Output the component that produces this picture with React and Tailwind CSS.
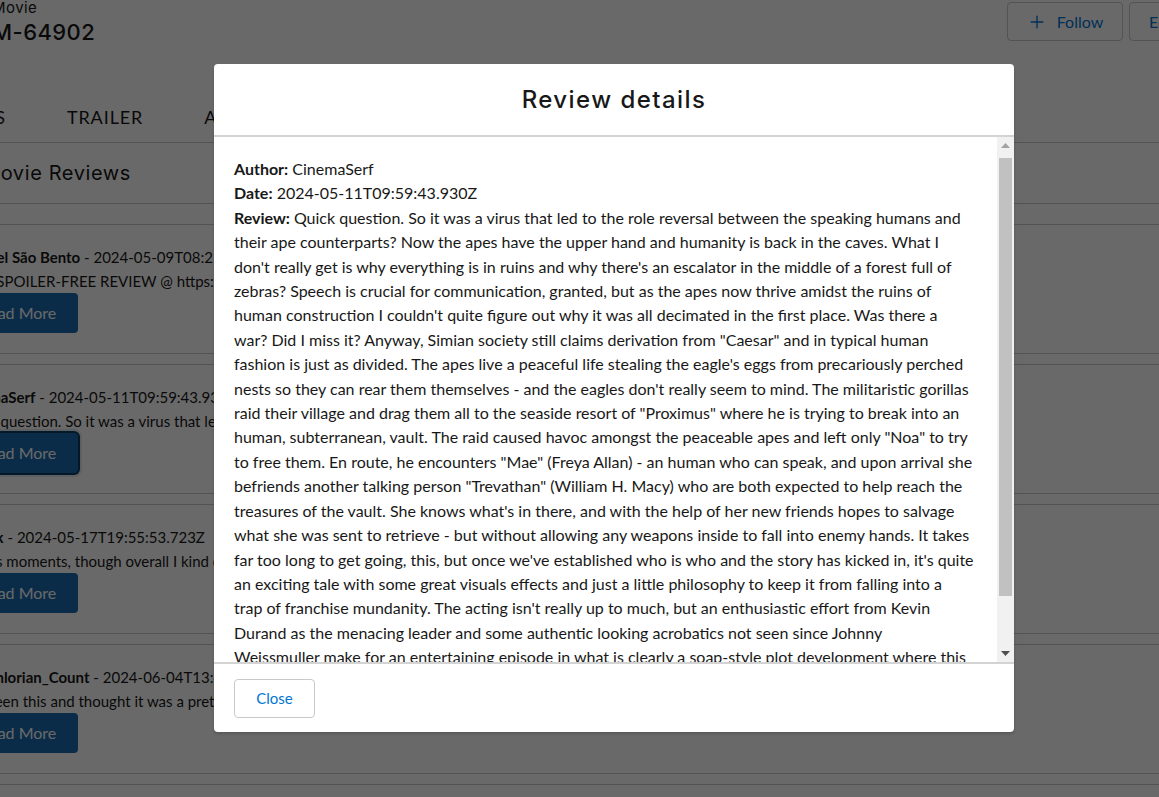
import { Plus } from 'lucide-react'

// review text broken the way the dialog wraps it
const reviewLines = [
  'Quick question. So it was a virus that led to the role reversal between the speaking humans and',
  'their ape counterparts? Now the apes have the upper hand and humanity is back in the caves. What I',
  "don't really get is why everything is in ruins and why there's an escalator in the middle of a forest full of",
  'zebras? Speech is crucial for communication, granted, but as the apes now thrive amidst the ruins of',
  "human construction I couldn't quite figure out why it was all decimated in the first place. Was there a",
  'war? Did I miss it? Anyway, Simian society still claims derivation from "Caesar" and in typical human',
  "fashion is just as divided. The apes live a peaceful life stealing the eagle's eggs from precariously perched",
  "nests so they can rear them themselves - and the eagles don't really seem to mind. The militaristic gorillas",
  'raid their village and drag them all to the seaside resort of "Proximus" where he is trying to break into an',
  'human, subterranean, vault. The raid caused havoc amongst the peaceable apes and left only "Noa" to try',
  'to free them. En route, he encounters "Mae" (Freya Allan) - an human who can speak, and upon arrival she',
  'befriends another talking person "Trevathan" (William H. Macy) who are both expected to help reach the',
  "treasures of the vault. She knows what's in there, and with the help of her new friends hopes to salvage",
  'what she was sent to retrieve - but without allowing any weapons inside to fall into enemy hands. It takes',
  "far too long to get going, this, but once we've established who is who and the story has kicked in, it's quite",
  'an exciting tale with some great visuals effects and just a little philosophy to keep it from falling into a',
  "trap of franchise mundanity. The acting isn't really up to much, but an enthusiastic effort from Kevin",
  'Durand as the menacing leader and some authentic looking acrobatics not seen since Johnny',
  'Weissmuller make for an entertaining episode in what is clearly a soap-style plot development where this',
  "franchise is heading. It's watchable, if a little long.",
]

const reviews = [
  { author: 'Manuel São Bento', date: '2024-05-09T08:21:14.650Z', text: 'FULL SPOILER-FREE REVIEW @ https://fandomwire.com/kingdom-of-the-planet' },
  { author: 'CinemaSerf', date: '2024-05-11T09:59:43.930Z', text: 'Quick question. So it was a virus that led to the role reversal', focused: true },
  { author: 'r96skk', date: '2024-05-17T19:55:53.723Z', text: 'Has its moments, though overall I kind of expected more' },
  { author: 'Midichlorian_Count', date: '2024-06-04T13:40:22.118Z', text: 'Just seen this and thought it was a pretty solid entry' },
]

function ReviewRow({ r }) {
  return (
    <div className="mb-[10px] h-[130px] border-y border-[#c9c9c9] pl-[4px] pt-[20px]">
      <p className="whitespace-nowrap text-[15px] leading-6 text-[#181818]">
        <span className="font-bold">{r.author}</span> - {r.date}
      </p>
      <p className="whitespace-nowrap text-[15px] leading-6 text-[#181818]">{r.text}</p>
      <button
        className={
          'h-10 w-[120px] rounded-[4px] bg-[#1a6bb0] text-[16px] text-white ' +
          (r.focused ? 'shadow-[0_0_0_2px_#0d3a60,0_0_0_4px_#e3e8ee]' : '')
        }
      >
        Read More
      </button>
    </div>
  )
}

function ScrollTrack() {
  return (
    <div className="flex w-[17px] flex-col bg-[#f1f1f1]">
      <div className="flex h-[17px] items-center justify-center">
        <svg width="9" height="5" viewBox="0 0 9 5">
          <path d="M0 5 L4.5 0 L9 5 Z" fill="#a3a3a3" />
        </svg>
      </div>
      <div className="flex-1 px-[2px] pb-[49px] pt-[4px]">
        <div className="h-full bg-[#c1c1c1]" />
      </div>
      <div className="flex h-[17px] items-center justify-center">
        <svg width="9" height="5" viewBox="0 0 9 5">
          <path d="M0 0 L4.5 5 L9 0 Z" fill="#505050" />
        </svg>
      </div>
    </div>
  )
}

export default function App() {
  return (
    <div className="relative h-[797px] w-[1159px] overflow-hidden bg-white font-['Lato',sans-serif]">
      {/* page behind the modal */}
      <div className="ml-[-46px]">
        <div className="flex h-[46px] items-start justify-between">
          <div className="pl-[38px]">
            <p className="font-['Inter',sans-serif] text-[15px] leading-[16px] tracking-[0.03em] text-[#181818]">Movie</p>
            <p className="mt-[2px] font-['Inter',sans-serif] text-[22px] font-medium leading-[28px] tracking-[0.02em] text-[#181818]">
              M-64902
            </p>
          </div>
          <div className="mr-[-50px] mt-[2px] flex gap-[6px]">
            <button className="flex h-[39px] w-[116px] items-center justify-center gap-[10px] rounded-[4px] border border-[#c9c9c9] bg-white text-[16px] text-[#0176d3]">
              <Plus size={20} strokeWidth={1.6} />
              Follow
            </button>
            <button className="h-[39px] w-[80px] rounded-[4px] border border-[#c9c9c9] bg-white pl-[19px] text-left text-[16px] text-[#0176d3]">
              Edit
            </button>
          </div>
        </div>

        <div className="flex h-[97px] items-start gap-[61px] border-b border-[#c9c9c9] pt-[60px]">
          <span className="ml-[-32px] text-[18px] uppercase leading-[22px] tracking-[0.05em] text-[#181818]">Reviews</span>
          <span className="text-[18px] uppercase leading-[22px] tracking-[0.05em] text-[#181818]">Trailer</span>
          <span className="text-[18px] uppercase leading-[22px] tracking-[0.05em] text-[#181818]">About</span>
        </div>

        <div className="flex h-[61px] items-center border-b border-[#c9c9c9] pl-[28px]">
          <h2 className="font-['Inter',sans-serif] text-[20px] tracking-[0.03em] text-[#181818]">Movie Reviews</h2>
        </div>

        <div className="mt-[20px]">
          {reviews.map((r) => (
            <ReviewRow key={r.author} r={r} />
          ))}
          <div className="h-[40px] border-t border-[#c9c9c9]" />
        </div>
      </div>

      {/* backdrop */}
      <div className="absolute inset-0 bg-black/[0.588]" />

      {/* modal */}
      <div className="absolute left-[214px] top-[64px] flex h-[668px] w-[800px] flex-col overflow-hidden rounded-[4px] bg-white shadow-[0_2px_3px_rgba(0,0,0,0.16)]">
        <div className="flex h-[73px] shrink-0 items-center justify-center border-b-2 border-[#d3d3d3]">
          <h1 className="font-['Inter',sans-serif] text-[24px] font-[450] tracking-[0.06em] text-[#181818]">Review details</h1>
        </div>

        <div className="flex min-h-0 flex-1">
          <div className="min-w-0 flex-1 overflow-hidden pl-5 pr-[24px] pt-5 text-[16px] leading-[24.4px] text-[#181818]">
            <p>
              <span className="font-bold">Author:</span> CinemaSerf
            </p>
            <p>
              <span className="font-bold">Date:</span> 2024-05-11T09:59:43.930Z
            </p>
            <div>
              {reviewLines.map((line, i) => (
                <p key={i} className="whitespace-nowrap">
                  {i === 0 && <span className="font-bold">Review: </span>}
                  {line}
                </p>
              ))}
            </div>
          </div>
          <ScrollTrack />
        </div>

        <div className="flex h-[70px] shrink-0 items-center border-t-2 border-[#d3d3d3] px-5">
          <button className="h-[39px] w-[81px] rounded-[4px] border border-[#c9c9c9] bg-white text-[15px] text-[#0176d3]">
            Close
          </button>
        </div>
      </div>
    </div>
  )
}
